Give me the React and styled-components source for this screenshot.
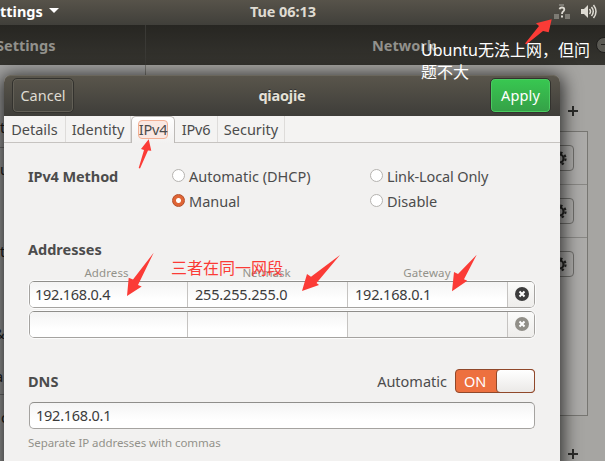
import React from 'react';
import styled, { createGlobalStyle } from 'styled-components';

const Global = createGlobalStyle`
  * { box-sizing: border-box; }
  body { margin: 0; overflow: hidden; font: 14.5px/20px "Noto Sans", "Open Sans", sans-serif; color: #4c4c4c; }
`;
const Desktop = styled.div`
  position: relative; width: 605px; height: 461px; overflow: hidden;
  display: flex; flex-direction: column; background: #a6a5a2;
`;
const Text = styled.span`
  white-space: nowrap; letter-spacing: ${p => p.$ls || 0}px;
  font-size: ${p => p.$size || 14.5}px; font-weight: ${p => (p.$bold ? 700 : 400)};
`;
const TopBar = styled.header`
  flex: none; height: 25px; display: grid; grid-template-columns: 250px 1fr auto; align-items: center;
  color: #dfdbd2; background: linear-gradient(#57534a, #403f3a);
`;
const AppMenu = styled.div`display: flex; align-items: center; gap: 6px; color: #fff; height: 21px; margin-top: -3px;`;
const Clock = styled.div`height: 21px; margin-top: -4px; display: flex; align-items: center;`;
const Tray = styled.div`display: flex; align-items: center; gap: 11px; padding-right: 8px; height: 20px; margin-top: -3px;`;
const TitleRow = styled.div`
  flex: none; height: 40px; display: grid; grid-template-columns: 146px 1fr; color: #92918c;
  background: linear-gradient(#272622, #35342f);
`;
const SideTitle = styled.div`
  display: flex; align-items: center; border-right: 1px solid #3a3935; overflow: hidden; padding-bottom: 1px;
  span { margin-left: -4px; }
`;
const MainTitle = styled.div`
  display: flex; align-items: center; justify-content: space-between; padding: 0 0 1px 226px; overflow: hidden;
`;
const MinButton = styled.div`
  flex: none; width: 18px; height: 16px; margin-right: -9px; border-radius: 9px; background: #5a5953;
  border: 1px solid #1e1d1b; display: flex; align-items: center; padding-left: 4px;
  &::after { content: ''; width: 8px; height: 1px; background: #22211e; }
`;
const Backdrop = styled.div`flex: 1; min-height: 0; display: grid; grid-template-columns: 146px 1fr;`;
const Sidebar = styled.aside`border-right: 1px solid #777671; color: #22221f; overflow: hidden; background: #a4a4a3;`;
const SideItem = styled.div`
  height: ${p => p.$h}px; border-bottom: ${p => (p.$line ? '1px solid #777' : '0')};
  display: flex; align-items: ${p => (p.$end ? 'flex-end' : 'center')}; overflow: hidden;
  padding-bottom: ${p => (p.$end ? 10 : 0)}px; text-indent: ${p => p.$dx || 0}px;
`;
const Panel = styled.section`padding-left: 39px; display: flex; flex-direction: column; background: #a6a5a2;`;
const AddRow = styled.div`
  height: ${p => p.$h}px; width: 393px; display: flex; justify-content: flex-end; align-items: flex-end;
  padding-bottom: ${p => p.$pb}px;
`;
const DeviceList = styled.div`width: 403px; height: 285px; border: 1px solid #777672; background: #acaba9;`;
const Device = styled.div`
  height: 53px; border-bottom: 1px solid ${p => (p.$last ? 'transparent' : '#888784')};
  padding: 13px 13px 0 0; display: flex; justify-content: flex-end;
`;
const GearButton = styled.div`
  width: 30px; height: 26px; border: 1px solid #6f6e6b; border-radius: 4px;
  display: flex; align-items: center; justify-content: center;
`;
const Dialog = styled.main`
  position: absolute; left: 4px; top: 75px; width: 556px; height: 400px; background: #f2f1f0;
  border-radius: 7px 7px 0 0; box-shadow: 0 3px 18px 3px rgba(0,0,0,.75); display: flex; flex-direction: column;
`;
const DialogHeader = styled.div`
  flex: none; height: 41px; display: flex; align-items: center; justify-content: space-between;
  padding: 0 9px 0 8px; border-radius: 7px 7px 0 0; color: #dfdbd2;
  background: linear-gradient(#5a564c, #3e3d39); box-shadow: inset 0 1px #6a665c;
`;
const HeadButton = styled.button`
  width: ${p => (p.$go ? 61 : 62)}px; height: 35px; padding: 0 0 2px; border-radius: 5px; color: ${p => (p.$go ? '#fff' : '#dfdbd2')};
  font-family: inherit; border: 1px solid #33322e;
  background: ${p => (p.$go ? 'linear-gradient(#38c851, #35a047)' : 'linear-gradient(#57534a, #45443e)')};
  box-shadow: inset 0 0 0 1px ${p => (p.$go ? '#4acb60' : '#625f56')};
`;
const Title = styled.div`color: #e5e1d8; text-shadow: 0 -1px #333; padding: 0 0 1px 0;`;
const Tabs = styled.nav`flex: none; height: 27px; display: flex; border-bottom: 1px solid #c6c3c0; background: #f4f3f2;`;
const Tab = styled.div`
  width: ${p => p.$w}px; display: flex; justify-content: center; align-items: center; height: 26px; padding-bottom: 1px;
  border-right: 1px solid #dedcda;
  ${p => p.$active && `
    height: 27px; border: 1px solid #bdbab7; border-bottom: 0; border-radius: 5px 5px 0 0;
    background: linear-gradient(#fff, #f2f1f0);
  `}
`;
const Focus = styled.div`
  width: 30px; height: 19px; border: 1px solid #f3b095; border-radius: 4px; background: #fae8e2;
  display: flex; align-items: center; justify-content: center; padding-bottom: 1px;
`;
const Body = styled.div`padding: 23px 25px 0 24px; display: flex; flex-direction: column;`;
const Method = styled.div`display: grid; grid-template-columns: 144px 198px 1fr; height: 50px; grid-auto-rows: 25px;`;
const Option = styled.div`display: flex; gap: 4px; height: 20px; align-items: center; grid-column: ${p => p.$col};`;
const Radio = styled.i`
  flex: none; width: 13px; height: 13px; border-radius: 50%; border: 1px solid #b5b3b0; background: #fff;
  margin-top: -1px;
  ${p => p.$on && 'border-color: #b44e2b; background: radial-gradient(circle, #fff 0 2px, #df6535 3px);'}
`;
const Section = styled.div`
  display: flex; align-items: center; justify-content: space-between; height: 24px; margin-top: ${p => p.$mt}px;
`;
const Columns = styled.div`
  display: grid; grid-template-columns: 157px 163px 158px; height: 20px; padding-top: 2px; align-items: center;
  text-align: center; color: #92918a;
`;
const EntryRow = styled.div`
  display: grid; grid-template-columns: 158px 160px 160px 26px; height: 27px; margin: 0 0 3px 1px; color: #3b3b3b;
  border: 1px solid #a5a3a0; border-top-color: #8f8e8b; border-radius: 5px; overflow: hidden;
  outline: 1px solid #fcfcfc;
`;
const Cell = styled.div`
  display: flex; align-items: center; padding: 0 0 1px ${p => (p.$first ? 5 : 7)}px; border-right: 1px solid #c5c3c1;
  background: ${p => (p.$off ? '#f4f4f3' : 'linear-gradient(#f4f4f4, #fff 70%)')};
`;
const Remove = styled.div`
  display: flex; align-items: center; justify-content: flex-end; padding: 0 5px 1px 0;
  background: linear-gradient(#fbfbfa, #eeedeb);
`;
const Automatic = styled.div`display: flex; align-items: center; gap: 8px;`;
const Switch = styled.div`
  width: 80px; height: 24px; border: 1px solid #90482a; border-radius: 4px; background: #ed703f;
  display: flex; justify-content: space-between; color: #fff; align-items: center; padding-left: 8px;
`;
const Knob = styled.i`
  width: 39px; height: 24px; margin: -1px; border: 1px solid #90482a; border-radius: 4px;
  background: linear-gradient(#fff, #ebe9e7);
`;
const DnsInput = styled.div`
  height: 27px; margin: 9px 0 0 1px; border: 1px solid #a5a3a0; border-top-color: #8f8e8b; border-radius: 5px;
  display: flex; align-items: center; padding: 0 0 1px 6px; color: #3b3b3b; background: linear-gradient(#f4f4f4, #fff 70%);
`;
const Hint = styled.div`margin-top: 4px; color: #92918a; height: 20px; display: flex; align-items: center;`;
const Note = styled.div`
  position: absolute; left: ${p => p.$x}px; top: ${p => p.$y}px; width: 176px; color: ${p => p.$c};
  font: 16px/22px "Noto Sans", "Noto Sans CJK SC", sans-serif;
`;
const Arrows = styled.svg`position: absolute; inset: 0; pointer-events: none;`;

const Caret = () => <svg width="10" height="6"><path d="M0 0h10L5 5z" fill="#fff" /></svg>;
const Plus = () => <svg width="10" height="10"><path d="M5 0v10M0 5h10" stroke="#2c2c2a" strokeWidth="2" /></svg>;
const NetIcon = () => (
  <svg width="16" height="15">
    <path d="M5 0h5v2H5zM0 10h5v5H0zM11 10h5v5h-5z" fill="#7d7b74" />
    <path d="M5.5 5.2Q6 3.5 8 3.5q2.3 0 2.3 2 0 1.3-1.2 2Q8 8.2 8 10" fill="none" stroke="#dedbd3" strokeWidth="1.8" />
    <path d="M7 11.5h2v2H7z" fill="#dedbd3" />
  </svg>
);
const Volume = () => (
  <svg width="16" height="15" fill="none" stroke="#dedbd3" strokeWidth="1.5">
    <path d="M0 5h3l4-4v13l-4-4H0z" fill="#dedbd3" stroke="none" />
    <path d="M8.5 5q2 2.5 0 5M10.5 3q3.5 4.5 0 9M12.5 1q5 6.5 0 13" />
  </svg>
);
const Gear = () => (
  <svg width="15" height="15" viewBox="-7.5 -7.5 15 15" fill="none" stroke="#272725">
    <circle r="4" strokeWidth="2.2" />
    <circle r="6" strokeWidth="2.2" strokeDasharray="2.35 2.36" />
  </svg>
);
const Cross = ({ color }) => (
  <svg width="14" height="14"><circle cx="7" cy="7" r="7" fill={color} /><path d="M4.5 4.5l5 5m0-5l-5 5" stroke="#fff" strokeWidth="2" /></svg>
);

const sideItems = [
  { t: 't', h: 83, line: true, end: true }, { t: 'u', h: 42 }, { t: '', h: 36 }, { t: 't', h: 50 },
  { t: '', h: 32 }, { t: '&', h: 50, dx: -6 }, { t: 'a', h: 37, dx: -5, line: true }, { t: 'o', h: 44, dx: 1 },
];
const rows = [['192.168.0.4', '255.255.255.0', '192.168.0.1'], ['', '', '']];

export default function App() {
  return (
    <Desktop>
      <Global />
      <TopBar>
        <AppMenu><Text $bold>ttings</Text><Caret /></AppMenu>
        <Clock><Text $bold $ls={-0.1}>Tue 06:13</Text></Clock>
        <Tray><NetIcon /><Volume /></Tray>
      </TopBar>
      <TitleRow>
        <SideTitle><Text $bold>Settings</Text></SideTitle>
        <MainTitle><Text $bold>Network</Text><MinButton /></MainTitle>
      </TitleRow>
      <Backdrop>
        <Sidebar>
          {sideItems.map((s, i) => <SideItem key={i} $h={s.h} $line={s.line} $end={s.end} $dx={s.dx}>{s.t}</SideItem>)}
        </Sidebar>
        <Panel>
          <AddRow $h={66} $pb={15}><Plus /></AddRow>
          <DeviceList>{[0, 1, 2].map(i => <Device key={i} $last={i === 2}><GearButton><Gear /></GearButton></Device>)}</DeviceList>
          <AddRow $h={43} $pb={0}><Plus /></AddRow>
        </Panel>
      </Backdrop>
      <Dialog>
        <DialogHeader>
          <HeadButton><Text>Cancel</Text></HeadButton>
          <Title><Text $bold $ls={-0.2}>qiaojie</Text></Title>
          <HeadButton $go><Text $ls={0.15}>Apply</Text></HeadButton>
        </DialogHeader>
        <Tabs>
          <Tab $w={62}><Text>Details</Text></Tab>
          <Tab $w={65}><Text>Identity</Text></Tab>
          <Tab $w={44} $active><Focus><Text $ls={-0.2}>IPv4</Text></Focus></Tab>
          <Tab $w={43}><Text $ls={-0.2}>IPv6</Text></Tab>
          <Tab $w={67}><Text>Security</Text></Tab>
        </Tabs>
        <Body>
          <Method>
            <Text $bold $ls={-0.1}>IPv4 Method</Text>
            <Option $col={2}><Radio /><Text>Automatic (DHCP)</Text></Option>
            <Option $col={3}><Radio /><Text $ls={-0.13}>Link-Local Only</Text></Option>
            <Option $col={2}><Radio $on /><Text>Manual</Text></Option>
            <Option $col={3}><Radio /><Text>Disable</Text></Option>
          </Method>
          <Section $mt={21}><Text $bold>Addresses</Text></Section>
          <Columns>
            <Text $size={11.5} $ls={0.1}>Address</Text>
            <Text $size={11.5}>Netmask</Text>
            <Text $size={11.5} $ls={0.1}>Gateway</Text>
          </Columns>
          {rows.map((r, i) => (
            <EntryRow key={i}>
              {r.map((v, j) => (
                <Cell key={j} $first={j === 0} $off={i === 1 && j === 2}><Text $ls={j === 0 ? -0.25 : -0.17}>{v}</Text></Cell>
              ))}
              <Remove><Cross color={i ? '#918f88' : '#3d3d3d'} /></Remove>
            </EntryRow>
          ))}
          <Section $mt={28}>
            <Text $bold>DNS</Text>
            <Automatic><Text>Automatic</Text><Switch><Text>ON</Text><Knob /></Switch></Automatic>
          </Section>
          <DnsInput><Text $ls={-0.25}>192.168.0.1</Text></DnsInput>
          <Hint><Text $size={11.5} $ls={-0.06}>Separate IP addresses with commas</Text></Hint>
        </Body>
      </Dialog>
      <Note $x={421} $y={39} $c="#fff">Ubuntu无法上网，但问题不大</Note>
      <Note $x={171} $y={257} $c="#fb3b36">三者在同一网段</Note>
      <Arrows width="605" height="461" fill="#fb3b36">
        <path d="M551.7 19.3L536 23.3 539 26 525 43.5 526.5 44.300 543 31 548.700 32.300z" />
        <path d="M148.700 139.300L141 149 144 150 138.700 168 140 168.500 148 150.500 151.300 150.700z" />
        <path d="M127 296L128.700 277.700 133 279.500 153.700 252.700 138 285 141.700 286.500z" />
        <path d="M302 291L307 274 311 276.700 340 255 316.500 283 319 285z" />
        <path d="M452 291.300L454 272 458 274 476.700 254.700 464 279.200 467.300 280.700z" />
      </Arrows>
    </Desktop>
  );
}
